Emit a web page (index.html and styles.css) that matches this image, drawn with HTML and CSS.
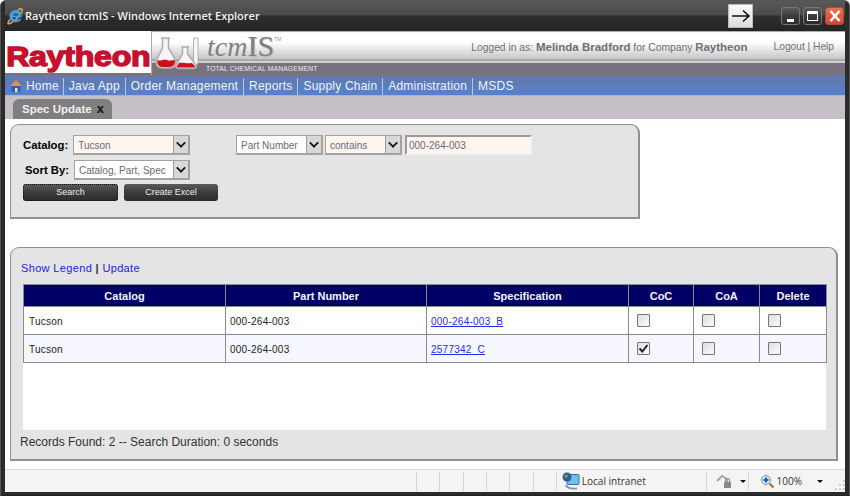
FILE: index.html
```html
<!DOCTYPE html>
<html lang="en">
<head>
<meta charset="utf-8">
<title>Raytheon tcmIS - Windows Internet Explorer</title>
<link rel="stylesheet" href="styles.css">
</head>
<body>
<div class="window">
  <div class="titlebar">
    <svg class="ie-icon" width="18" height="18" viewBox="0 0 18 18">
      <path d="M4 12.500C1 16 1.500 17.500 4 16.500C8 15 14 9 16 4.500C17 2 15.500 1 12 2.800" fill="none" stroke="#eaa52e" stroke-width="1.600"/>
      <path d="M15.500 10.500H7c.3 3 4.500 3.500 6 1.200h2.300c-1.800 5-11 5-11.800-1.700C3 5 8 2.500 11 3c3.500 .5 5 4 4.500 7.500zM7.100 8.600h5.300c-.1-3-5-3-5.300 0z" fill="#3f9fee"/>
    </svg>
    <span class="window-title">Raytheon tcmIS - Windows Internet Explorer</span>
    <div class="arrow-box">
      <svg width="20" height="14" viewBox="0 0 20 14"><path d="M1 7H18M12 1.500L18 7L12 12.500" fill="none" stroke="#111" stroke-width="1.600"/></svg>
    </div>
    <div class="win-buttons">
      <span class="win-btn"><i class="glyph-min"></i></span>
      <span class="win-btn"><i class="glyph-max"></i></span>
      <span class="win-btn win-close">
        <svg width="14" height="12" viewBox="0 0 14 12"><path d="M2.500 1L11.500 11M11.500 1L2.500 11" stroke="#fff" stroke-width="2.600"/></svg>
      </span>
    </div>
  </div>

  <div class="page">
    <header class="masthead">
      <div class="logo"><span class="logo-text">Raytheon</span></div>
      <div class="brand">
        <div class="brand-top">
          <svg class="flasks" width="44" height="33" viewBox="0 0 44 33">
            <path d="M38.500 1H43V26C43 28 41 28 38.500 27z" fill="#f6f6f6" stroke="#b0b0b0"/>
            <path d="M6 1H15M7.500 1V11L2 22C0 28 3 31 7 31H15C19 31 22 28 20 22L13.500 11V1" fill="#f6f6f6" stroke="#adadad" stroke-width="1.500"/>
            <path d="M26 10H34M27.500 10V17L21 28C20 31 22 31.500 24 31.500H38C41 31.500 42 30 41 28L32.500 17V10" fill="#f6f6f6" stroke="#adadad" stroke-width="1.500"/>
            <path d="M2.500 23C6 25 9 21 12 23C15 24.500 17 23 19.500 23C21 27 18 30 15 30H7C4 30 1.500 27 2.500 23z" fill="#c8141e"/>
            <path d="M24 26C28 25 32 27 37 26L40 29C40.500 30 39.500 30.500 38 30.500H24C22 30.500 21.500 30 22 29z" fill="#c8141e"/>
          </svg>
          <span class="tcm">tcm</span><span class="is">IS</span><sup class="tm">TM</sup>
          <div class="session">
            <span>Logged in as: <b>Melinda Bradford</b> for Company <b>Raytheon</b></span>
            <span class="session-links">Logout | Help</span>
          </div>
        </div>
        <div class="brand-band">TOTAL CHEMICAL MANAGEMENT</div>
      </div>
    </header>

    <nav class="nav">
      <svg class="home" width="14" height="14" viewBox="0 0 14 14">
        <path d="M7 1L13 7H1z" fill="#d69a3a"/><rect x="2.500" y="7" width="9" height="6" fill="#2f5fb0"/><rect x="6" y="9" width="2.500" height="4" fill="#f4e2b0"/>
      </svg>
      <a class="nav-item nav-first">Home</a>
      <a class="nav-item">Java App</a>
      <a class="nav-item">Order Management</a>
      <a class="nav-item">Reports</a>
      <a class="nav-item">Supply Chain</a>
      <a class="nav-item">Administration</a>
      <a class="nav-item nav-last">MSDS</a>
    </nav>

    <div class="tabstrip">
      <div class="tab">Spec Update <b class="tab-x">x</b></div>
    </div>

    <main class="content">
      <section class="panel search-panel">
        <div class="search-grid">
          <div class="search-left">
            <div class="field">
              <label class="label">Catalog:</label>
              <div class="select w-catalog tinted"><span class="value">Tucson</span><span class="arrow"></span></div>
            </div>
            <div class="field">
              <label class="label">Sort By:</label>
              <div class="select w-sort"><span class="value">Catalog, Part, Spec</span><span class="arrow"></span></div>
            </div>
          </div>
          <div class="search-right">
            <div class="select w-part"><span class="value">Part Number</span><span class="arrow"></span></div>
            <div class="select w-contains"><span class="value">contains</span><span class="arrow"></span></div>
            <input class="text-input" value="000-264-003">
          </div>
        </div>
        <div class="buttons">
          <button class="btn btn-focus">Search</button>
          <button class="btn">Create Excel</button>
        </div>
      </section>

      <section class="panel results-panel">
        <div class="links"><a>Show Legend</a> <span class="sep">|</span> <a>Update</a></div>
        <div class="table-wrap">
          <table class="grid">
            <colgroup>
              <col class="c-1"><col class="c-2"><col class="c-1"><col class="c-4"><col class="c-5"><col class="c-6">
            </colgroup>
            <thead>
              <tr><th>Catalog</th><th>Part Number</th><th>Specification</th><th>CoC</th><th>CoA</th><th>Delete</th></tr>
            </thead>
            <tbody>
              <tr>
                <td>Tucson</td><td>000-264-003</td><td><a class="spec">000-264-003_B</a></td>
                <td><span class="check"></span></td><td><span class="check"></span></td><td><span class="check"></span></td>
              </tr>
              <tr class="alt">
                <td>Tucson</td><td>000-264-003</td><td><a class="spec">2577342_C</a></td>
                <td><span class="check">
                  <svg width="11" height="11" viewBox="0 0 11 11"><path d="M1.500 5.500L4.300 8.500L9.500 2" fill="none" stroke="#222" stroke-width="2"/></svg>
                </span></td>
                <td><span class="check"></span></td><td><span class="check"></span></td>
              </tr>
            </tbody>
          </table>
        </div>
        <div class="records">Records Found: 2 -- Search Duration: 0 seconds</div>
      </section>
    </main>

    <footer class="statusbar">
      <span class="st-cell st-grow"></span>
      <span class="st-cell st-a"></span>
      <span class="st-cell st-b"></span>
      <span class="st-cell st-a"></span>
      <span class="st-cell st-a"></span>
      <span class="st-cell st-b"></span>
      <span class="st-cell st-a"></span>
      <span class="st-cell st-zone">
        <svg width="18" height="18" viewBox="0 0 18 18">
          <rect x="5" y="2.500" width="12" height="10" rx="1" fill="#6cc0ee" stroke="#3e6c96"/>
          <circle cx="5" cy="5" r="4.500" fill="#2c5a96"/>
          <path d="M2 4C3 2 5 2 6 3C7 5 5 7 3 6z" fill="#5a9a50"/>
          <path d="M4 13C5 16 9 17 15 16.500" fill="none" stroke="#7d93aa" stroke-width="2"/>
        </svg>
        <span class="zone-name">Local intranet</span>
      </span>
      <span class="st-cell st-lock">
        <svg width="17" height="16" viewBox="0 0 17 16">
          <path d="M1 8L6 3L11 6V9" fill="none" stroke="#a8a8a8" stroke-width="2"/>
          <rect x="8" y="9" width="7" height="6" fill="#8a8a8a"/>
          <path d="M9.500 9V7C9.500 5 13.500 5 13.500 7V9" fill="none" stroke="#8a8a8a" stroke-width="1.200"/>
        </svg>
        <i class="caret"></i>
      </span>
      <span class="st-cell st-zoom">
        <svg width="15" height="15" viewBox="0 0 15 15">
          <circle cx="6" cy="6" r="4.500" fill="#d5e6f7" stroke="#7f97b0"/>
          <path d="M6 3.500V8.500M3.500 6H8.500" stroke="#1f5fc0" stroke-width="2"/>
          <path d="M9.500 9.500L13.500 13.500" stroke="#a8682a" stroke-width="2"/>
        </svg>
        <span class="zoom-value">100%</span>
        <i class="caret"></i>
        <svg class="grip" width="10" height="10" viewBox="0 0 10 10">
          <path d="M8 0h2v2H8zM4 4h2v2H4zM8 4h2v2H8zM0 8h2v2H0zM4 8h2v2H4zM8 8h2v2H8z" fill="#cfcfcf"/>
        </svg>
      </span>
    </footer>
  </div>
</div>
</body>
</html>
```
FILE: styles.css
```css
* { box-sizing: border-box; }
html, body { margin: 0; padding: 0; }
body { width: 850px; height: 496px; overflow: hidden; background: #fff; font-family: "Liberation Sans", Arial, sans-serif; }

.window { width: 850px; height: 496px; display: flex; flex-direction: column; padding: 0 4px 3px 4px; background: #2b2b2b; border: 1px solid #555; border-radius: 6px 6px 0 0; border-bottom-color: #222; }

.titlebar { height: 30px; flex: none; display: flex; align-items: flex-start; background: linear-gradient(#585858 0, #4b4b4b 45%, #2f2f2f 50%, #242424 100%); }
.ie-icon { margin: 6px 0 0 1px; }
.window-title { margin: 8px 0 0 1px; color: #f2f2f2; font: 600 11px/14px "Open Sans", sans-serif; }
.arrow-box { margin: 3px 0 0 auto; width: 25px; height: 24px; background: linear-gradient(#fafafa, #dcdcdc); border: 1px solid #bbb; display: flex; align-items: center; justify-content: center; }
.win-buttons { margin: 6px 1px 0 28px; display: flex; gap: 3px; }
.win-btn { width: 19px; height: 18px; border: 1px solid #777; border-radius: 3px; background: linear-gradient(#5c5c5c, #3b3b3b 50%, #2b2b2b); display: flex; align-items: center; justify-content: center; }
.glyph-min { width: 7px; height: 3px; background: #fff; margin-top: 8px; }
.glyph-max { width: 11px; height: 10px; border: 1px solid #fff; border-top-width: 3px; }
.win-close { border-color: #b04a30; background: linear-gradient(#ea7050, #d8482e); }

.page { flex: 1; min-height: 0; display: flex; flex-direction: column; background: #fff; }

.masthead { flex: none; height: 44px; display: flex; background: #78727f; }
.logo { width: 146px; height: 42px; background: #fff; }
.logo-text { display: block; width: 128px; padding: 11px 0 0 1px; color: #c8102e; font: 700 28px/30px "Liberation Sans", sans-serif; letter-spacing: -.2px; -webkit-text-stroke: 1.500px #c8102e; transform: scaleX(1.145); transform-origin: left; white-space: nowrap; }
.brand { flex: 1; display: flex; flex-direction: column; border-left: 1px solid #a9a9a9; }
.brand-top { position: relative; height: 32px; display: flex; align-items: baseline; padding-left: 55px; background: linear-gradient(#8a8a8a 0, #fff 5%, #fff 35%, #c9c9c9 85%, #9d9d9d 92%, #e6e6e6 96%, #b5b5b5 100%); }
.brand-band { height: 12px; padding-left: 54px; background: #78727f; color: #ececec; font: 400 6.700px/12px "Liberation Sans", sans-serif; letter-spacing: .2px; }
.flasks { position: absolute; left: 3px; top: 6px; }
.tcm { color: #7f7f7f; font: italic 400 28px/30px "Liberation Serif", serif; }
.is { color: #7f7f7f; font: 400 30px/30px "Liberation Serif", serif; text-shadow: 1px 1px 0 #bbb; }
.tm { font: 400 5px/5px "Liberation Sans", sans-serif; color: #999; align-self: flex-start; margin-top: 6px; }
.session { margin-left: auto; display: flex; align-self: flex-start; padding: 9px 11px 0 0; color: #6f6f78; font-size: 10.300px; line-height: 14px; }
.session b { font-weight: 700; font-size: 11.500px; }
.session-links { margin-left: 26px; font-size: 10.200px; }

.nav { flex: none; height: 21px; display: flex; align-items: center; padding: 1px 0 0 4px; background: linear-gradient(#5f7bb4 0, #5f7bb4 50%, #597fc6 55%, #597fc6 95%, #dfe6f2 100%); }
.home { margin-right: 3px; }
.nav-item { padding: 0 5px; height: 17px; border-right: 1px solid #b8c8e4; color: #f2f4f8; font-size: 12px; line-height: 16px; letter-spacing: .2px; white-space: nowrap; }
.nav-first { padding: 0 4px 0 0; }
.nav-last { border-right: 0; }

.tabstrip { flex: none; height: 23px; padding: 3px 0 0 8px; background: #c4c0c6; }
.tab { width: 99px; height: 20px; padding: 2px 0 0 9px; background: #7f7f7f; border-radius: 6px 6px 0 0; color: #f0f0f0; font-size: 11.500px; font-weight: 700; line-height: 15px; }
.tab-x { margin-left: 2px; color: #111; font-size: 13px; }

.content { flex: 1; min-height: 0; display: flex; flex-direction: column; align-items: flex-start; padding: 5px 6px 0 5px; }
.panel { background: #e4e4e4; border: 1px solid #8f8f8f; border-right-width: 2px; border-bottom-width: 2px; border-radius: 9px 9px 0 0; }

.search-panel { width: 630px; height: 95px; padding: 10px 0 0 12px; }
.search-grid { display: flex; }
.search-left { width: 213px; display: flex; flex-direction: column; gap: 5px; }
.search-right { display: flex; gap: 2px; align-items: flex-start; }
.field { display: flex; width: 167px; justify-content: flex-end; align-items: center; gap: 5px; }
.label { color: #000; font-size: 11.300px; font-weight: 700; line-height: 14px; }
.select { height: 20px; display: flex; align-items: stretch; background: #fff; border: 1px solid #a2a2a2; border-width: 1px 2px 2px 1px; color: #6a6a78; font-size: 10px; }
.tinted .value, .w-contains .value { background: #fdf5ee; }
.value { flex: 1; padding-left: 4px; line-height: 19px; white-space: nowrap; overflow: hidden; }
.arrow { position: relative; flex: none; width: 15px; background: #d8d8d8; border-left: 1px solid #9c9c9c; }
.arrow::after { content: ""; position: absolute; left: 3px; top: 3px; width: 6px; height: 6px; border: solid #111; border-width: 0 2px 2px 0; transform: rotate(45deg) scale(.85); }
.w-catalog { width: 117px; }
.w-sort { width: 116px; }
.w-part { width: 87px; }
.w-contains { width: 77px; }
.text-input { width: 127px; height: 20px; margin: 0 0 0 1px; padding: 1px 0 0 2px; background: #fdf5ee; border: 2px solid; border-color: #9a9a9a #f2f2f2 #f2f2f2 #9a9a9a; color: #6a6a78; font: 10px/16px "Liberation Sans", sans-serif; outline: 0; }
.buttons { display: flex; gap: 6px; margin-top: 4px; }
.btn { width: 94px; height: 17px; padding: 0 0 1px; border: 0; border-radius: 3px; background: linear-gradient(#5b5b5b, #3c3c3c 50%, #2c2c2c); color: #eee; font: 9px/14px "Liberation Sans", sans-serif; }
.btn-focus { width: 95px; outline: 1px dotted #111; outline-offset: -1px; }

.results-panel { margin-top: 28px; width: 828px; height: 214px; padding: 14px 0 0 10px; }
.links { height: 22px; color: #333; font-size: 11px; line-height: 13px; letter-spacing: .35px; }
.links a { color: #2222dd; }
.sep { color: #333; font-weight: 700; }
.table-wrap { width: 803px; height: 146px; margin-left: 2px; background: #fff; }
.grid { width: 803px; table-layout: fixed; border-collapse: collapse; font-size: 10px; letter-spacing: .25px; color: #222; }
.c-1 { width: 202px; }
.c-2 { width: 201px; }
.c-4 { width: 65px; }
.c-5 { width: 66px; }
.c-6 { width: 67px; }
.grid th { height: 22px; padding: 0; background: #000066; border: 1px solid #8b8b96; color: #f4f4f4; font-size: 11px; font-weight: 700; letter-spacing: 0; }
.grid td { height: 28px; padding: 1px 0 0 4px; background: #fff; border: 1px solid #8b8b96; }
.grid td:first-child { padding-left: 5px; }
.spec { color: #2a2ae6; text-decoration: underline; }
.grid .alt td { background: #f6f6fe; }
.check { display: block; width: 13px; height: 13px; margin: -1px 0 0 4px; background: linear-gradient(135deg, #dedede, #fbfbfb); border: 1px solid #777; border-radius: 1px; }
.check svg { display: block; }
.records { padding: 5px 0 0; margin-left: -1px; color: #333; font-size: 12px; line-height: 14px; }

.statusbar { flex: none; height: 23px; display: flex; align-items: center; background: #f4f4f4; border-top: 1px solid #dcdcdc; color: #333; font: 10.500px/14px "Liberation Sans", sans-serif; }
.st-cell { height: 19px; display: flex; align-items: center; border-right: 1px solid #d4d4d4; }
.st-grow { flex: none; width: 412px; }
.st-a { width: 23px; }
.st-b { width: 24px; }
.st-zone { width: 150px; padding-left: 5px; gap: 2px; }
.zone-name { font: 10px/14px "Open Sans", sans-serif; }
.st-lock { width: 42px; padding-left: 9px; gap: 7px; }
.st-zoom { padding-left: 11px; border-right: 0; flex: 1; }
.zoom-value { margin: 0 15px 0 2px; font: 10px/14px "Open Sans", sans-serif; }
.caret { width: 0; height: 0; border: solid transparent; border-width: 3px 3px 0; border-top-color: #111; }
.grip { margin: 8px 0 0 12px; }
```
